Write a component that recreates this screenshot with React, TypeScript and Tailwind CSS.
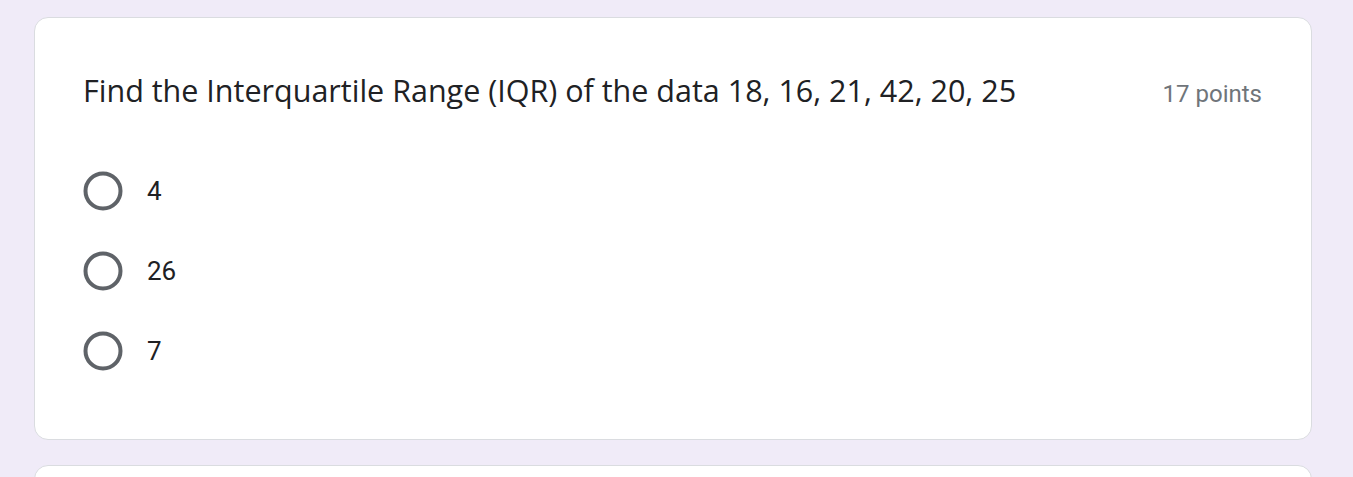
import React from "react";

function Radio() {
  return (
    <svg width="40" height="40" viewBox="0 0 40 40" className="shrink-0">
      <circle cx="20" cy="20" r="17.5" fill="none" stroke="#5f6368" strokeWidth="4" />
    </svg>
  );
}

export default function App() {
  const options = ["4", "26", "7"];
  return (
    <div className="h-[477px] w-[1353px] overflow-hidden bg-[#f0ebf8] pt-[17px]">
      <div className="ml-[34px] w-[1278px] rounded-[14px] border border-[#dadce0] bg-white pl-[48px] pr-[49px] pt-[52px] pb-[48px]">
        <div className="flex h-[40px] items-baseline justify-between">
          <div className="text-[30.5px] leading-[40px] text-[#202124] [font-family:'Open_Sans',sans-serif]">
            Find the Interquartile Range (IQR) of the data 18, 16, 21, 42, 20, 25
          </div>
          <div className="text-[24px] leading-[24px] text-[#70757a] [font-family:Roboto,sans-serif]">
            17 points
          </div>
        </div>
        <div className="mt-[41px] flex flex-col">
          {options.map((o) => (
            <div key={o} className="flex h-[80px] items-center gap-[24px]">
              <Radio />
              <span className="text-[26px] text-[#202124] [font-family:Roboto,sans-serif]">{o}</span>
            </div>
          ))}
        </div>
      </div>
      <div className="ml-[34px] mt-[25px] h-[40px] w-[1278px] rounded-[14px] border border-[#dadce0] bg-white" />
    </div>
  );
}
